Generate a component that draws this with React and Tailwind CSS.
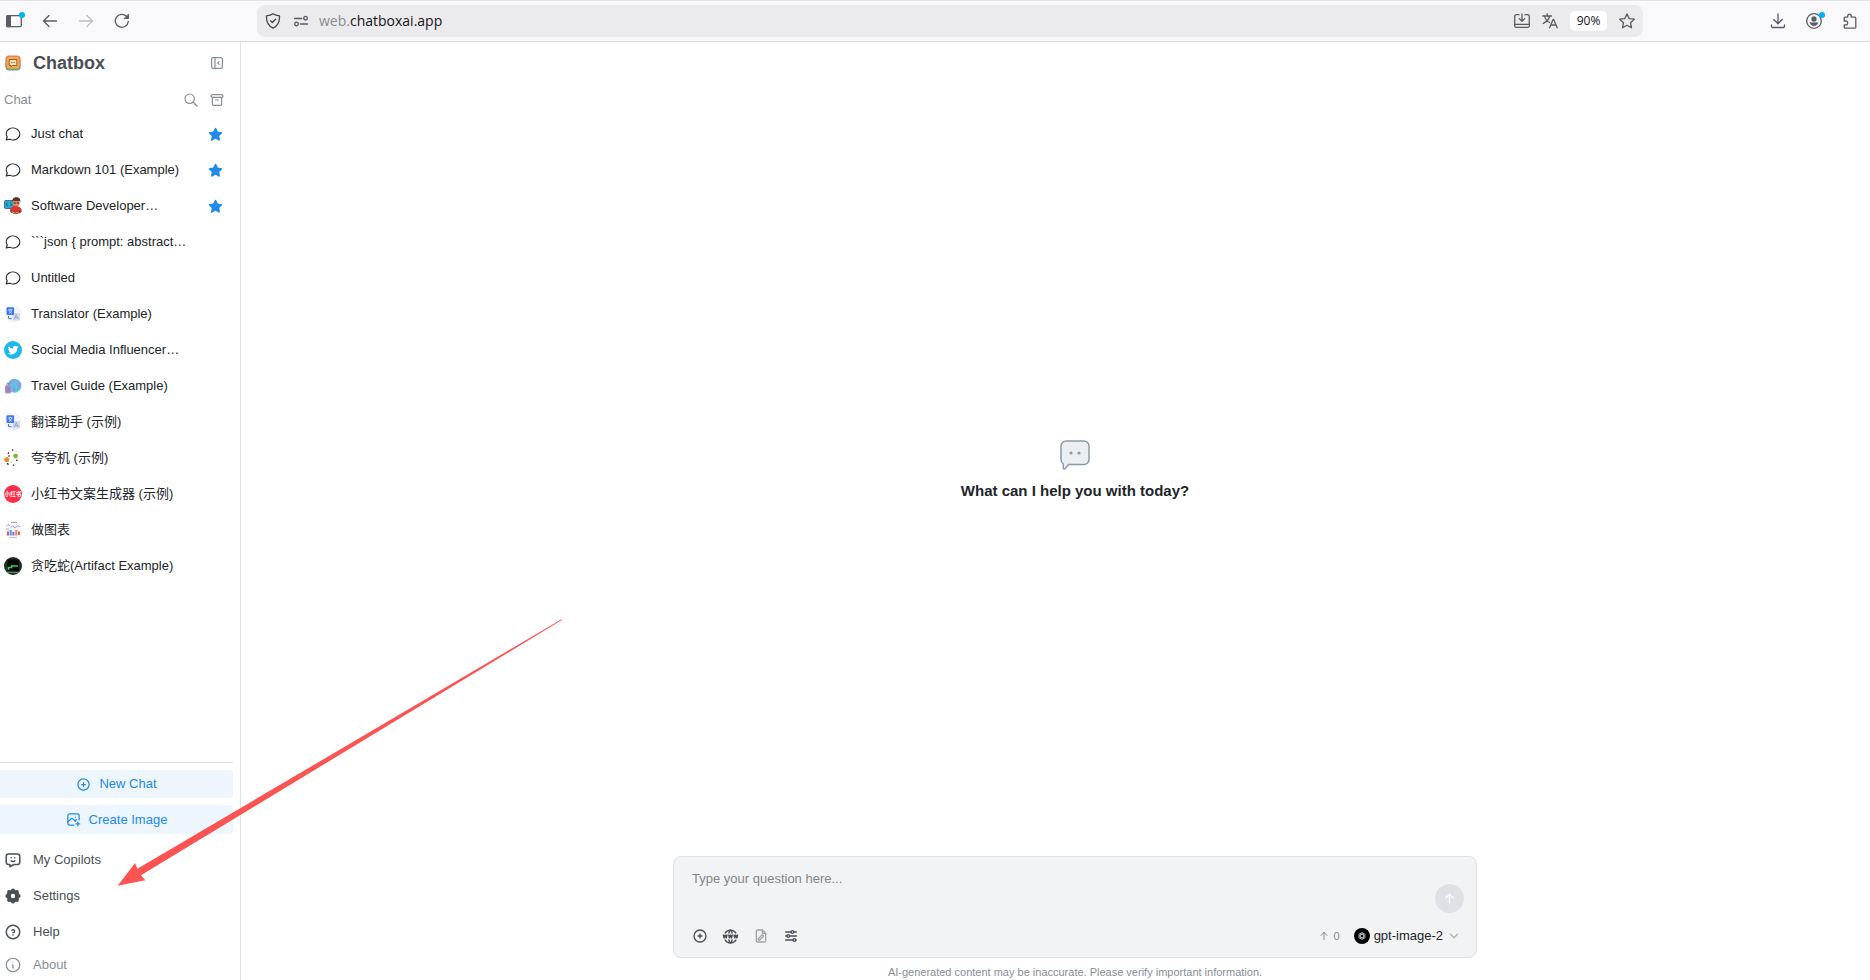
import React from "react";
import {
  TbLayoutSidebarLeftCollapse,
  TbSearch,
  TbArchive,
  TbMessageCircle,
  TbStarFilled,
  TbCirclePlus,
  TbPhotoPlus,
  TbMessageChatbot,
  TbHelpCircle,
  TbInfoCircle,
  TbWorldWww,
  TbFilePencil,
  TbAdjustmentsHorizontal,
  TbArrowUp,
  TbChevronDown,
} from "react-icons/tb";

const Bubble = () => <TbMessageCircle size={18} strokeWidth={1.6} aria-hidden="true" />;

function Avatar({ children }) {
  return (
    <svg width="18" height="18" viewBox="0 0 18 18" aria-hidden="true">
      {children}
    </svg>
  );
}

const Developer = () => (
  <Avatar>
    <rect x="0.5" y="3.5" width="11" height="8" rx="1" fill="#2aa7d6" stroke="#1f4a5c" strokeWidth="0.7" />
    <path d="M3.6 6 2.2 7.4l1.4 1.4M6.4 6l1.4 1.4-1.4 1.4" stroke="#12384a" strokeWidth="0.9" fill="none" />
    <path d="M6 14.500c0-3.600 2.200-5.500 5.600-5.500s6.200 2 6.200 5.200c-1 1.800-2.800 2.500-5 2.500-2.600 0-5.200-.4-6.800-2.200Z" fill="#e0352f" />
    <circle cx="12.200" cy="5.800" r="3.500" fill="#d98e63" />
    <path d="M8.300 4.800C8 1.500 10 .3 12.400.3c2.800 0 4.500 1.800 3.900 5l-1-1.600c-2 .6-4.400.4-6-.3Z" fill="#5b3226" />
    <path d="M9.600 6h2.200m1 0h2.200" stroke="#2a1c1c" strokeWidth="1.100" />
    <path d="M7 14.300 11.500 16.200l4.500-2" stroke="#3f231d" strokeWidth="1.800" fill="none" />
    <path d="M7.500 14.600 11.500 16.200l3.500-1.400" stroke="#e7a57d" strokeWidth="1.200" fill="none" />
  </Avatar>
);

const Translate = () => (
  <Avatar>
    <circle cx="9" cy="9" r="9" fill="#f5f5f6" />
    <rect x="8.500" y="8" width="7.500" height="7.500" rx="1" fill="#d5dae2" />
    <path d="m10.400 14 1.900-4.400 1.900 4.400m-3.100-1.500h2.400" stroke="#7fa6ee" strokeWidth="0.9" fill="none" />
    <rect x="2.500" y="2.300" width="7.600" height="7.600" rx="1" fill="#3c78f0" />
    <path d="M4.200 4.800h4.200M6.300 3.800v1M5 8.400c1.600-.8 2.500-2 2.600-3.500M5 5c.4 1.500 1.400 2.700 2.800 3.400" stroke="#dfe9ff" strokeWidth="0.800" fill="none" />
    <path d="M4.500 11v1.600c0 .8.5 1.200 1.200 1.200h2" stroke="#3c78f0" strokeWidth="1.100" fill="none" />
  </Avatar>
);

const Bird = () => (
  <Avatar>
    <circle cx="9" cy="9" r="9" fill="#1cb7eb" />
    <path
      transform="translate(3.700 3.700) scale(0.450)"
      fill="#fff"
      d="M24 4.600a10 10 0 0 1-2.800.8 4.900 4.900 0 0 0 2.100-2.700 9.800 9.800 0 0 1-3.100 1.200 4.900 4.900 0 0 0-8.400 4.500A14 14 0 0 1 1.700 3.200a4.900 4.900 0 0 0 1.500 6.500 4.900 4.900 0 0 1-2.200-.6 4.900 4.900 0 0 0 3.900 4.900 4.900 4.900 0 0 1-2.200.1 4.900 4.900 0 0 0 4.600 3.400A9.900 9.900 0 0 1 0 19.500a14 14 0 0 0 21.500-12.400A10 10 0 0 0 24 4.600Z"
    />
  </Avatar>
);

const Globe = () => (
  <Avatar>
    <circle cx="10.500" cy="8.800" r="7" fill="#5cc4e2" />
    <path d="M7 4c1.800-1.800 3.500-1.800 4.500-1-.6 1.600-2.300 1.500-2.800 2.800S7.200 7.200 6 7ZM13.500 5.500c1.200-.6 2.300-.2 3 .8.500 2.200 0 3.700-1.200 5.200-1.200-.4-.8-1.800-1.700-2.400s-1-2.700-.1-3.600ZM9 10.500l2.600 1-.6 2.800-2-.8Z" fill="#9a94da" />
    <rect x="1" y="8" width="6" height="8.500" rx="1.500" fill="#ab90c4" />
    <path d="M3 8V6.200h2V8M3 10v4.500M5 10v4.500" stroke="#8770a8" strokeWidth="0.800" fill="none" />
  </Avatar>
);

const Cheer = () => (
  <Avatar>
    <path d="m.3 9.500 3-1.800 1.900 2-.4 3-2.600.6L.5 12Z" fill="#f08a1d" />
    <path d="m8.800 6.300 2.700-1.800 2.600 1.200-.9 3.200-2.400.6Z" fill="#78b83a" />
    <path d="M3.800 4.700 5.200 3.500M8 .8l1.400.4M13.400 10.700l-1 1.300M3 14.300l1.600 1.300M8.800 15.900l1.300.4M5.400 6.300l-.8 1.300" stroke="#4c3527" strokeWidth="1.400" />
    <path d="M11.500 2 12.500 2.500M6.800 13l1 .8" stroke="#d8b44a" strokeWidth="1" />
  </Avatar>
);

const RedBook = () => (
  <Avatar>
    <circle cx="9" cy="9" r="9" fill="#ff2c46" />
    <text x="9" y="11" textAnchor="middle" fontSize="5.600" fontWeight="700" fill="#fff" fontFamily="'Noto Sans CJK SC', sans-serif">
      小红书
    </text>
  </Avatar>
);

const Charts = () => (
  <Avatar>
    <circle cx="9" cy="9" r="8.500" fill="#f7f8fc" />
    <path d="M2 5.500 4 3.500l2 1.500M7 1.500h6M2 8h3" stroke="#9aa3c7" strokeWidth="0.900" fill="none" />
    <path d="m6.500 6.500 2-1.500 2.500 1.700 3-2.100 2 1.300" stroke="#8d86c9" strokeWidth="0.800" fill="none" />
    <path d="M4 14.500V10.500" stroke="#e5487d" strokeWidth="2" />
    <path d="M6.700 14.500V9" stroke="#3aa7dc" strokeWidth="2" />
    <path d="M9.400 14.500V11" stroke="#8b5de5" strokeWidth="2" />
    <path d="M12.200 14.500V9" stroke="#f5883a" strokeWidth="2" />
    <path d="M15 14V10.500" stroke="#e5484d" strokeWidth="1.800" />
    <path d="M5 16.500h8" stroke="#aab2d5" strokeWidth="0.800" />
  </Avatar>
);

const Snake = () => (
  <Avatar>
    <circle cx="9" cy="9" r="9" fill="#1d2f27" />
    <rect x="3.500" y="2.500" width="11.500" height="12" fill="#050807" />
    <path d="M4.500 12.800v-2.300h3.200V9H14" stroke="#46c552" strokeWidth="1.600" fill="none" />
    <path d="M3 15.300h12" stroke="#6f8f7f" strokeWidth="1.200" />
  </Avatar>
);

const chats = [
  { title: "Just chat", icon: Bubble, starred: true },
  { title: "Markdown 101 (Example)", icon: Bubble, starred: true },
  { title: "Software Developer…", icon: Developer, starred: true },
  { title: "```json { prompt: abstract…", icon: Bubble },
  { title: "Untitled", icon: Bubble },
  { title: "Translator (Example)", icon: Translate },
  { title: "Social Media Influencer…", icon: Bird },
  { title: "Travel Guide (Example)", icon: Globe },
  { title: "翻译助手 (示例)", icon: Translate },
  { title: "夸夸机 (示例)", icon: Cheer },
  { title: "小红书文案生成器 (示例)", icon: RedBook },
  { title: "做图表", icon: Charts },
  { title: "贪吃蛇(Artifact Example)", icon: Snake },
];

function BarIcon({ children, className = "" }) {
  return (
    <svg width="16" height="16" viewBox="0 0 16 16" fill="none" stroke="currentColor" strokeWidth="1.300" strokeLinecap="round" strokeLinejoin="round" className={className} aria-hidden="true">
      {children}
    </svg>
  );
}

function BrowserBar() {
  return (
    <header className="flex h-[42px] shrink-0 items-center border-t border-b border-t-[#e4e4e7] border-b-[#dcdcdf] bg-[#f9f9fb] text-[#5b5b66]">
      <div className="flex w-[257px] shrink-0 items-center gap-5 pl-[6px]">
        <button aria-label="Sidebar" className="relative">
          <BarIcon>
            <rect x="0.700" y="2.700" width="14.600" height="11" rx="1.500" />
            <path d="M1 3h3.300v10.500H1Z" fill="currentColor" />
          </BarIcon>
          <span className="absolute -top-px -right-[3px] size-[6px] rounded-full bg-[#00b3f4]" />
        </button>
        <button aria-label="Back">
          <BarIcon><path d="M14.500 8H1.500M7 2.500 1.500 8 7 13.500" /></BarIcon>
        </button>
        <button aria-label="Forward" className="text-[#bfbfc5]">
          <BarIcon><path d="M1.500 8h13M9 2.500 14.500 8 9 13.500" /></BarIcon>
        </button>
        <button aria-label="Reload">
          <BarIcon>
            <path d="M14.300 8.500A6.500 6.500 0 1 1 12.500 3.300L14 4.800" />
            <path d="M14.600 1.300v4.200h-4.200Z" fill="currentColor" strokeWidth="0.800" />
          </BarIcon>
        </button>
      </div>
      <div className="flex h-8 flex-1 items-center rounded-lg bg-[#ebebed] px-2">
        <button aria-label="Tracking protection" className="text-[#45454f]">
          <BarIcon>
            <path d="M8 .8c1.800 1.300 4 1.900 6.500 2.100.3 5.700-1.700 10-6.500 12.300C3.200 12.900 1.200 8.600 1.500 2.900 4 2.700 6.200 2.100 8 .8Z" />
            <path d="m5.500 7.700 1.800 1.800 3.300-3.300" />
          </BarIcon>
        </button>
        <button aria-label="Site permissions" className="ml-3 text-[#5b5b66]">
          <BarIcon>
            <path d="M1.500 5.500h7.300M7.300 11h7.200" />
            <circle cx="12.500" cy="5.200" r="1.800" />
            <circle cx="3.500" cy="11" r="1.800" />
          </BarIcon>
        </button>
        <div className="ml-[10px] flex-1 font-['Open_Sans',sans-serif] text-[14px] leading-5 text-[#15141a]">
          <span className="text-[#8a8a90]">web.</span>chatboxai.app
        </div>
        <div className="flex items-center gap-3">
          <button aria-label="Install">
            <BarIcon>
              <path d="M5 1.700H2.200A1.500 1.500 0 0 0 .7 3.200v9.600a1.500 1.500 0 0 0 1.500 1.500h11.600a1.500 1.500 0 0 0 1.500-1.500V3.200a1.500 1.500 0 0 0-1.500-1.500H11M.7 11.300h14.600M8 1v7M5.300 5.600 8 8.300l2.700-2.700" />
            </BarIcon>
          </button>
          <button aria-label="Translate page">
            <BarIcon>
              <path d="M.8 3h8.700M5.100 1v2M2.600 3c.5 2.700 2.500 5.200 5 6.500M7.700 3C7 6 4.600 8.700 1.200 10.500M7.600 14.800l3.500-8.300h.6l3.500 8.300M8.800 12h5.200" />
            </BarIcon>
          </button>
          <button className="h-5 w-[37px] rounded-[5px] bg-white font-['Open_Sans',sans-serif] text-[12px] leading-5 text-[#15141a]">90%</button>
          <button aria-label="Bookmark">
            <BarIcon>
              <path d="m8 .9 2.200 4.700 5.100.6-3.800 3.500 1 5.100L8 12.300l-4.500 2.500 1-5.100L.7 6.200l5.100-.6Z" />
            </BarIcon>
          </button>
        </div>
      </div>
      <div className="flex w-[227px] shrink-0 items-center justify-end gap-5 pr-3">
        <button aria-label="Downloads">
          <BarIcon><path d="M8 1v9.500M3.800 6.500 8 10.700l4.200-4.200M1.500 12v1.500a1 1 0 0 0 1 1h11a1 1 0 0 0 1-1V12" /></BarIcon>
        </button>
        <button aria-label="Account" className="relative">
          <BarIcon>
            <circle cx="8" cy="8" r="7.300" />
            <circle cx="8" cy="6" r="2" fill="currentColor" />
            <path d="M4.200 9.800h7.600c-.4 1.800-1.900 2.900-3.800 2.900s-3.400-1.100-3.800-2.900Z" fill="currentColor" strokeWidth="0.600" />
          </BarIcon>
          <span className="absolute -top-px -right-[3px] size-[6px] rounded-full bg-[#00b3f4]" />
        </button>
        <button aria-label="Extensions">
          <BarIcon>
            <path d="M2.200 8V5.200a1 1 0 0 1 1-1h2.500V2.900a1.800 1.800 0 0 1 3.600 0v1.300h3.500a1 1 0 0 1 1 1v9a1 1 0 0 1-1 1H3.200a1 1 0 0 1-1-1v-2.400h1.600a1.900 1.900 0 0 0 0-3.800Z" />
          </BarIcon>
        </button>
      </div>
    </header>
  );
}

function Logo() {
  return (
    <svg width="16" height="16" viewBox="0 0 16 16" aria-hidden="true">
      <rect x="0.500" y="3" width="15" height="12.500" rx="3.500" fill="#45b3a0" />
      <rect x="0.500" y="0.500" width="15" height="13.800" rx="3.500" fill="#dd7d55" />
      <rect x="1.800" y="1.800" width="12.400" height="11.600" rx="2.500" fill="#f0b048" />
      <path d="M4.200 4.500h7.600v6H7.500l-1.500 1.300v-1.300H4.200Z" fill="#fbdcb5" stroke="#8a5540" strokeWidth="0.900" />
      <path d="M6 7.500h.9m.7 0h.9m.7 0h.9" stroke="#8a5540" strokeWidth="0.900" />
    </svg>
  );
}

function Gear() {
  return (
    <svg width="18" height="18" viewBox="0 0 18 18" fill="currentColor" aria-hidden="true">
      <circle cx="9" cy="9" r="4.300" fill="none" stroke="currentColor" strokeWidth="4.200" />
      <circle cx="9" cy="3.300" r="1.900" />
      <circle cx="13" cy="5" r="1.900" />
      <circle cx="14.700" cy="9" r="1.900" />
      <circle cx="13" cy="13" r="1.900" />
      <circle cx="9" cy="14.700" r="1.900" />
      <circle cx="5" cy="13" r="1.900" />
      <circle cx="3.300" cy="9" r="1.900" />
      <circle cx="5" cy="5" r="1.900" />
    </svg>
  );
}

function Sidebar() {
  return (
    <aside className="flex w-[241px] shrink-0 flex-col border-r border-[#dee2e6]">
      <div className="flex h-[42px] items-center pr-[15px] pl-[5px]">
        <Logo />
        <h1 className="ml-3 flex-1 text-[18px] leading-6 font-bold text-[#495057]">Chatbox</h1>
        <button aria-label="Collapse sidebar" className="text-[#868e96]">
          <TbLayoutSidebarLeftCollapse size={16} strokeWidth={1.800} />
        </button>
      </div>
      <div className="flex h-8 items-center gap-[10px] pr-[15px] pl-1 text-[#868e96]">
        <h2 className="flex-1 text-[13px]">Chat</h2>
        <button aria-label="Search"><TbSearch size={16} strokeWidth={1.800} /></button>
        <button aria-label="Archive"><TbArchive size={16} strokeWidth={1.800} /></button>
      </div>
      <ul>
        {chats.map((c) => (
          <li key={c.title} className="flex h-9 items-center pr-[17px] pl-1">
            <button className="flex min-w-0 flex-1 items-center gap-[9px] text-left text-[#212529]">
              <c.icon />
              <span className="truncate">{c.title}</span>
            </button>
            {c.starred && (
              <button aria-label="Unstar" className="text-[#228be6]"><TbStarFilled size={15} /></button>
            )}
          </li>
        ))}
      </ul>
      <div className="mt-auto flex flex-col pr-[7px]">
        <div className="mb-[7px] border-t border-[#dee2e6]" />
        <button className="mb-[7px] flex h-[28px] items-center justify-center gap-2 rounded-r bg-[#edf5fd] text-[#228be6]">
          <TbCirclePlus size={15} />
          New Chat
        </button>
        <button className="mb-2 flex h-[29px] items-center justify-center gap-2 rounded-r bg-[#edf5fd] text-[#228be6]">
          <TbPhotoPlus size={15} />
          Create Image
        </button>
        <nav className="flex flex-col text-[#495057]">
          <a href="#copilots" className="flex h-9 items-center gap-[11px] pl-1"><TbMessageChatbot size={18} />My Copilots</a>
          <a href="#settings" className="flex h-9 items-center gap-[11px] pl-1"><Gear />Settings</a>
          <a href="#help" className="flex h-9 items-center gap-[11px] pl-1"><TbHelpCircle size={18} />Help</a>
          <a href="#about" className="flex h-[30px] items-center gap-[11px] pl-1 text-[#868e96]"><TbInfoCircle size={18} strokeWidth={1.600} />About</a>
        </nav>
      </div>
    </aside>
  );
}

function Composer() {
  return (
    <form className="flex w-full max-w-[804px] flex-col rounded-lg border border-[#dee2e6] bg-[#f1f3f5] pr-3 pl-[18px]">
      <div className="flex h-[62px]">
        <textarea
          aria-label="Question"
          placeholder="Type your question here..."
          className="mt-3 h-10 flex-1 resize-none bg-transparent leading-5 outline-none placeholder:text-[#868686]"
        />
        <button type="button" aria-label="Send" className="mt-[27px] flex size-[29px] items-center justify-center rounded-full bg-[#dee2e6] text-white">
          <TbArrowUp size={15} />
        </button>
      </div>
      <div className="flex h-[38px] items-center pb-1 text-[#495057]">
        <div className="flex flex-1 items-center gap-[14px]">
          <button type="button" aria-label="Attach"><TbCirclePlus size={16} /></button>
          <button type="button" aria-label="Web search"><TbWorldWww size={17} /></button>
          <button type="button" aria-label="Edit file" className="text-[#a0a5aa]"><TbFilePencil size={16} /></button>
          <button type="button" aria-label="Chat options"><TbAdjustmentsHorizontal size={16} /></button>
        </div>
        <span className="mr-[14px] flex items-center gap-1 text-[11px] text-[#868e96]">
          <TbArrowUp size={12} />0
        </span>
        <button type="button" className="mr-[3px] flex items-center gap-1 text-[#212529]">
          <svg width="16" height="16" viewBox="0 0 16 16" fill="none" aria-hidden="true">
            <circle cx="8" cy="8" r="8" fill="#000" />
            <g stroke="#d5d5d5" strokeWidth="0.700">
              <ellipse cx="8" cy="8" rx="1.700" ry="3.600" />
              <ellipse cx="8" cy="8" rx="1.700" ry="3.600" transform="rotate(60 8 8)" />
              <ellipse cx="8" cy="8" rx="1.700" ry="3.600" transform="rotate(120 8 8)" />
            </g>
          </svg>
          gpt-image-2
          <TbChevronDown size={14} strokeWidth={2.500} className="text-[#adb5bd]" />
        </button>
      </div>
    </form>
  );
}

function Arrow() {
  return (
    <svg className="pointer-events-none absolute top-[619px] left-[117px]" width="446" height="268" viewBox="117 619 446 268" aria-hidden="true">
      <path d="M117.700 885.700 135 863l2.300 5.700L561.500 619.300l.4.700L141 875.300l4.300 5Z" fill="#fc5353" />
    </svg>
  );
}

export default function App() {
  return (
    <div className="relative flex h-screen flex-col overflow-hidden bg-white font-['Liberation_Sans','Noto_Sans_CJK_SC',sans-serif] text-[13px] text-[#212529]">
      <BrowserBar />
      <div className="flex min-h-0 flex-1">
        <Sidebar />
        <main className="flex flex-1 flex-col items-center pl-[39px]">
          <div className="flex flex-1 flex-col items-center justify-center pt-[42px]">
            <svg width="32" height="32" viewBox="0 0 32 32" fill="none" aria-hidden="true">
              <path d="M7 2h18a5 5 0 0 1 5 5v13.500a5 5 0 0 1-5 5H9.500L6 29.700c-.8.700-1.700.2-1.700-.7v-4.200A5 5 0 0 1 2 20.500V7a5 5 0 0 1 5-5Z" fill="#eceff2" stroke="#8b9baa" strokeWidth="1.500" />
              <circle cx="12" cy="14" r="1.600" fill="#8b9baa" />
              <circle cx="20" cy="14" r="1.600" fill="#8b9baa" />
            </svg>
            <p className="mt-[10px] text-[15px] leading-5 font-bold">What can I help you with today?</p>
          </div>
          <Composer />
          <p className="mt-2 mb-[2px] text-[11px] leading-3 text-[#868e96]">
            AI-generated content may be inaccurate. Please verify important information.
          </p>
        </main>
      </div>
      <Arrow />
    </div>
  );
}
